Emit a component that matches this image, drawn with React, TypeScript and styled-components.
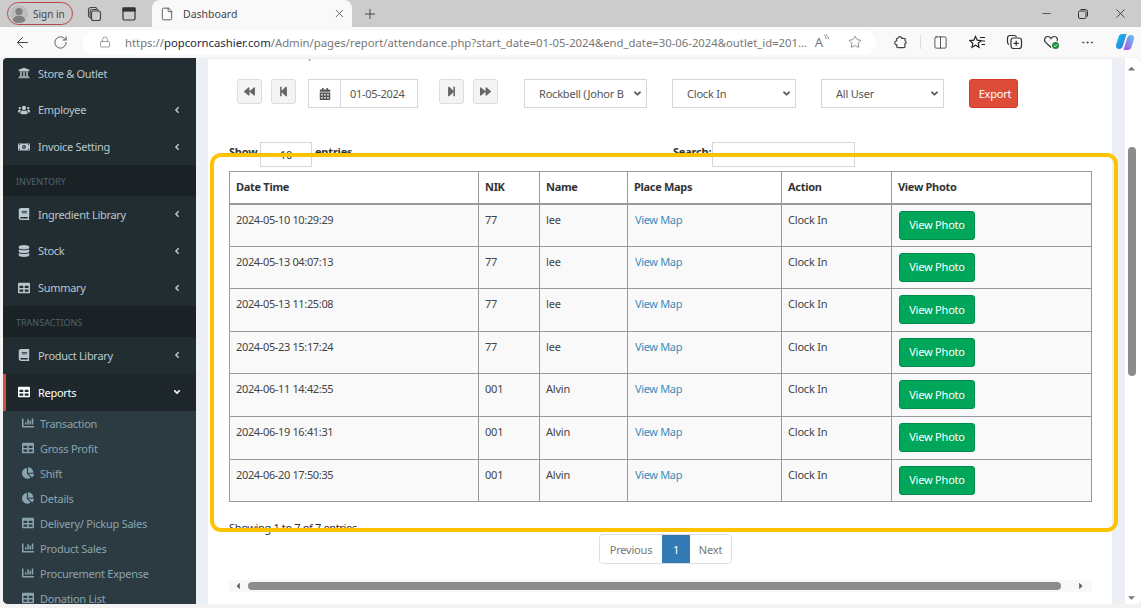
import React from "react";
import styled, { createGlobalStyle } from "styled-components";
import {
  FaUniversity, FaUsers, FaMoneyBillAlt, FaBook, FaDatabase, FaTable, FaChartBar, FaChartPie,
  FaBackward, FaForward, FaStepBackward, FaStepForward, FaCalendarAlt, FaAngleLeft, FaAngleDown, FaCaretUp, FaCaretDown, FaCaretLeft, FaCaretRight,
} from "react-icons/fa";
import { ArrowLeft, RotateCw, Lock, X, Plus, File, Star, Minus, Columns2, Ellipsis } from "lucide-react";

const BODY_FONT = `"Noto Sans", "Liberation Sans", sans-serif`;

const Global = createGlobalStyle`
  html, body { margin: 0; padding: 0; width: 1141px; height: 608px; overflow: hidden; background: #f3f3f3; }
  * { box-sizing: border-box; }
  body { font-family: ${BODY_FONT}; }
`;

const Frame = styled.div`
  position: relative;
  width: 1141px;
  height: 608px;
  display: flex;
  flex-direction: column;
  overflow: hidden;
`;

const TitleBar = styled.div`
  height: 27px;
  background: #cccccc;
  display: flex;
  align-items: flex-end;
  padding-left: 7px;
  color: #333;
`;

const SignIn = styled.div`
  width: 66px;
  height: 23px;
  margin-bottom: 2px;
  border: 1.5px solid #b5474a;
  border-radius: 12px;
  display: flex;
  align-items: center;
  gap: 5px;
  padding-left: 2px;
  font-size: 10px;
  color: #444;
`;

const Avatar = styled.svg`
  width: 18px;
  height: 18px;
  flex: none;
`;

const TitleIcon = styled.div<{ $ml: number }>`
  margin-left: ${(p) => p.$ml}px;
  height: 27px;
  display: flex;
  align-items: center;
  color: #444;
`;

const Tab = styled.div`
  width: 200px;
  height: 27px;
  margin-left: 16px;
  background: #f9f9f9;
  border-radius: 8px 8px 0 0;
  display: flex;
  align-items: center;
  padding: 0 6px 0 8px;
  font-size: 10.5px;
  color: #444;
`;

const TabLabel = styled.span`
  margin-left: 9px;
  flex: 1;
`;

const WindowControls = styled.div`
  margin-left: auto;
  height: 27px;
  display: flex;
  align-items: center;
  gap: 24px;
  padding-right: 13px;
  color: #333;
`;

const Toolbar = styled.div`
  height: 30px;
  background: #f9f9f9;
  display: flex;
  align-items: center;
  padding-left: 14px;
  color: #444;
`;

const AddressPill = styled.div`
  margin-left: 15px;
  width: 793px;
  height: 25px;
  background: #fff;
  border-radius: 13px;
  display: flex;
  align-items: center;
  padding: 0 14px 0 16px;
  font-size: 11.3px;
  white-space: nowrap;
  color: #777;
`;

const Url = styled.span`
  margin-left: 14px;
  flex: 1;
  overflow: hidden;
`;

const Host = styled.span`
  color: #1c2b3f;
`;

const ReadAloud = styled.span`
  display: flex;
  align-items: flex-start;
  font-size: 13px;
  line-height: 16px;
  color: #777;
  margin-right: 19px;
`;

const ToolIcons = styled.div`
  display: flex;
  align-items: center;
  margin-left: 17px;
  gap: 20px;
`;

const Divider = styled.div`
  width: 1px;
  height: 14px;
  background: #ddd;
  margin: 0 -8px;
`;

const FavIcon = styled.svg`
  margin-left: 1px;
`;

const Body = styled.div`
  flex: 1;
  display: flex;
  min-height: 0;
  padding: 1px 0 4px 3px;
  background: #f3f3f3;
`;

const Sidebar = styled.nav`
  width: 193px;
  flex: none;
  background: #222d32;
  border-radius: 4px 0 0 5px;
  overflow: hidden;
  font-size: 11px;
  letter-spacing: -0.3px;
`;

const MenuRow = styled.div<{ $active?: boolean; $h?: number }>`
  height: ${(p) => p.$h ?? 36.7}px;
  display: flex;
  align-items: center;
  padding-left: ${(p) => (p.$active ? 11 : 14)}px;
  padding-right: 14px;
  padding-bottom: ${(p) => (p.$h ? 4 : p.$active ? 0 : 1)}px;
  gap: 7px;
  color: ${(p) => (p.$active ? "#fff" : "#b8c7ce")};
  background: ${(p) => (p.$active ? "#1e282c" : "transparent")};
  border-left: ${(p) => (p.$active ? "3px solid #dd4b39" : "none")};
  svg { flex: none; }
`;

const MenuIcon = styled.span`
  width: 14px;
  display: flex;
  justify-content: center;
  font-size: 12px;
`;

const MenuLabel = styled.span`
  flex: 1;
`;

const SectionHead = styled.div`
  height: 31px;
  background: #1a2226;
  color: #4b646f;
  font-size: 9px;
  letter-spacing: 0;
  display: flex;
  align-items: center;
  padding: 1px 0 0 13px;
`;

const SubMenu = styled.div`
  background: #2c3b41;
`;

const SubRow = styled.div`
  height: 25px;
  display: flex;
  align-items: center;
  padding-left: 18px;
  gap: 5px;
  color: #8aa4af;
  font-size: 11px;
  letter-spacing: -0.25px;
`;

const SubIcon = styled.span`
  width: 14px;
  display: flex;
  justify-content: center;
  font-size: 12px;
`;

const Main = styled.main`
  flex: 1;
  min-width: 0;
  background: #ecf0f5;
  padding: 1px 13px 0 12px;
  display: flex;
`;

const Card = styled.div`
  flex: 1;
  min-width: 0;
  background: #fff;
  display: flex;
  flex-direction: column;
  color: #333;
  font-size: 11px;
  letter-spacing: -0.2px;
`;

const ClippedTitle = styled.div`
  height: 3px;
  overflow: hidden;
  padding-left: 20px;
  font-size: 11px;
  letter-spacing: 0.4px;
  line-height: 0;
  color: #777;
`;

const ClippedText = styled.span`
  display: block;
  transform: translateY(-5px);
`;

const Filters = styled.div`
  margin: 17px 0 0 29px;
  height: 29px;
  display: flex;
  align-items: flex-start;
`;

const StepButton = styled.div<{ $ml?: number }>`
  width: 25px;
  height: 25px;
  margin-left: ${(p) => p.$ml ?? 0}px;
  background: #f4f4f4;
  border: 1px solid #ddd;
  border-radius: 3px;
  display: flex;
  align-items: center;
  justify-content: center;
  color: #666;
  font-size: 11px;
`;

const DateGroup = styled.div`
  width: 110px;
  height: 29px;
  margin: 0 21px 0 12px;
  border: 1px solid #d2d6de;
  display: flex;
  align-items: center;
  color: #555;
`;

const DateAddon = styled.div`
  width: 32px;
  height: 100%;
  border-right: 1px solid #d2d6de;
  display: flex;
  align-items: center;
  justify-content: center;
  font-size: 12px;
`;

const DateValue = styled.span`
  margin-left: 9px;
  letter-spacing: -0.3px;
`;

const FilterSelect = styled.div<{ $w: number; $ml: number; $pl: number }>`
  width: ${(p) => p.$w}px;
  height: 29px;
  margin-left: ${(p) => p.$ml}px;
  padding: 0 3px 0 ${(p) => p.$pl}px;
  border: 1px solid #d2d6de;
  display: flex;
  align-items: center;
  justify-content: space-between;
  color: #555;
  white-space: nowrap;
  overflow: hidden;
`;

const SelectText = styled.span<{ $w?: number }>`
  ${(p) => (p.$w ? `width: ${p.$w}px;` : "")}
  overflow: hidden;
`;

const ExportButton = styled.div`
  width: 49px;
  height: 29px;
  margin-left: 25px;
  padding-left: 3px;
  background: #dd4b39;
  border: 1px solid #d73925;
  border-radius: 3px;
  color: #fff;
  display: flex;
  align-items: center;
  justify-content: center;
`;

const TableTools = styled.div`
  margin: 34px 0 0 21px;
  height: 25px;
  display: flex;
  align-items: flex-start;
  font-weight: 700;
`;

const ToolText = styled.span<{ $w?: number }>`
  margin-top: 2px;
  ${(p) => (p.$w ? `width: ${p.$w}px;` : "")}
`;

const LengthBox = styled.div`
  width: 52px;
  height: 25px;
  margin: 0 3px 0 0;
  border: 1px solid #d2d6de;
  display: flex;
  align-items: center;
  justify-content: center;
  font-weight: 400;
`;

const SearchBox = styled.div`
  width: 143px;
  height: 25px;
  margin-left: -1px;
  border: 1px solid #d2d6de;
`;

const Table = styled.table`
  margin: 4px 0 0 21px;
  width: 862px;
  border-collapse: collapse;
  table-layout: fixed;
`;

const Col = styled.col<{ $w: number }>`
  width: ${(p) => p.$w}px;
`;

const Th = styled.th`
  height: 32px;
  padding: 0 6px 2px;
  border: 1px solid #999;
  border-bottom-width: 2px;
  text-align: left;
  font-weight: 700;
  letter-spacing: -0.3px;
`;

const Td = styled.td`
  height: 42.6px;
  padding: 7px 6px 0;
  border: 1px solid #999;
  background: #f9f9f9;
  color: #444;
  vertical-align: top;
  line-height: 16px;
`;

const DateTd = styled(Td)`
  letter-spacing: -0.35px;
`;

const ButtonCell = styled(Td)`
  padding: 6px 7px 0;
`;

const MapLink = styled.span`
  color: #3c8dbc;
  letter-spacing: -0.35px;
  margin-left: 1px;
`;

const PhotoButton = styled.div`
  width: 76px;
  height: 29px;
  background: #00a65a;
  border: 1px solid #008d4c;
  border-radius: 3px;
  color: #fff;
  display: flex;
  align-items: center;
  justify-content: center;
`;

const InfoLine = styled.div`
  margin: 18px 0 0 21px;
  height: 14px;
  line-height: 16px;
  letter-spacing: -0.35px;
`;

const Pagination = styled.div`
  align-self: flex-start;
  margin: 0 0 0 391px;
  display: flex;
  height: 30px;
  border: 1px solid #ddd;
  border-radius: 4px;
  overflow: hidden;
  color: #777;
`;

const PageItem = styled.div<{ $w: number; $active?: boolean }>`
  width: ${(p) => p.$w}px;
  display: flex;
  align-items: center;
  justify-content: center;
  background: ${(p) => (p.$active ? "#337ab7" : "#fff")};
  color: ${(p) => (p.$active ? "#fff" : "#777")};
`;

const HScroll = styled.div`
  margin: 16px 0 0 21px;
  width: 863px;
  height: 12px;
  background: #f8f8f8;
  display: flex;
  align-items: center;
  padding: 0 6px 0 4px;
  color: #666;
  font-size: 10px;
`;

const HThumb = styled.div`
  width: 813px;
  height: 8px;
  margin: 0 auto 0 5px;
  background: #8c8c8c;
  border-radius: 4px;
`;

const VScroll = styled.div`
  width: 16px;
  flex: none;
  background: #fff;
  border-radius: 0 6px 6px 0;
  padding: 5px 3px 1px 0;
  display: flex;
  flex-direction: column;
  align-items: center;
  color: #777;
  font-size: 11px;
`;

const VThumb = styled.div`
  width: 8px;
  height: 229px;
  margin-top: 73px;
  margin-bottom: auto;
  background: #8c8c8c;
  border-radius: 4px;
`;

const Highlight = styled.div`
  position: absolute;
  left: 210px;
  top: 153px;
  width: 908px;
  height: 379px;
  border: 4px solid #fdc300;
  border-radius: 11px;
  pointer-events: none;
`;

const menuTop = [
  { icon: <FaUniversity />, label: "Store & Outlet", h: 34, arrow: false },
  { icon: <FaUsers />, label: "Employee", arrow: true },
  { icon: <FaMoneyBillAlt />, label: "Invoice Setting", arrow: true },
];
const menuInv = [
  { icon: <FaBook />, label: "Ingredient Library" },
  { icon: <FaDatabase />, label: "Stock" },
  { icon: <FaTable />, label: "Summary" },
];
const subs = [
  { icon: <FaChartBar />, label: "Transaction" },
  { icon: <FaTable />, label: "Gross Profit" },
  { icon: <FaChartPie />, label: "Shift" },
  { icon: <FaChartPie />, label: "Details" },
  { icon: <FaTable />, label: "Delivery/ Pickup Sales" },
  { icon: <FaChartBar />, label: "Product Sales" },
  { icon: <FaChartBar />, label: "Procurement Expense" },
  { icon: <FaTable />, label: "Donation List" },
];
const rows = [
  ["2024-05-10 10:29:29", "77", "lee"],
  ["2024-05-13 04:07:13", "77", "lee"],
  ["2024-05-13 11:25:08", "77", "lee"],
  ["2024-05-23 15:17:24", "77", "lee"],
  ["2024-06-11 14:42:55", "001", "Alvin"],
  ["2024-06-19 16:41:31", "001", "Alvin"],
  ["2024-06-20 17:50:35", "001", "Alvin"],
];

const Ic = { strokeWidth: 1.4 };

export default function App() {
  return (
    <Frame>
      <Global />
      <TitleBar>
        <SignIn>
          <Avatar viewBox="0 0 18 18">
            <circle cx="9" cy="9" r="9" fill="#bdbdbd" />
            <circle cx="9" cy="6.6" r="3.6" fill="#7f7f7f" />
            <path d="M2.6 15.4c.8-3.2 3.3-4.6 6.4-4.6s5.6 1.4 6.4 4.6A9 9 0 0 1 9 18a9 9 0 0 1-6.4-2.6z" fill="#7f7f7f" />
          </Avatar>
          Sign in
        </SignIn>
        <TitleIcon $ml={13}>
          <svg width="16" height="16" viewBox="0 0 16 16" fill="none" stroke="#444" strokeWidth="1.1">
            <rect x="5.5" y="5" width="9" height="9.5" rx="2" />
            <path d="M3.5 11.5A2 2 0 0 1 2.5 10V4a2.5 2.5 0 0 1 2.5-2.5h4.5A2 2 0 0 1 11 3" />
            <path d="M5 12.5A2 2 0 0 1 4.2 11V5.5A2 2 0 0 1 6.2 3.5h4.5A2 2 0 0 1 12.5 5" />
          </svg>
        </TitleIcon>
        <TitleIcon $ml={20}>
          <svg width="14" height="14" viewBox="0 0 14 14" fill="none" stroke="#333" strokeWidth="1.2">
            <rect x="1" y="1" width="12" height="12" rx="1.5" />
            <rect x="1" y="1" width="12" height="3" fill="#333" />
          </svg>
        </TitleIcon>
        <Tab>
          <File size={14} {...Ic} />
          <TabLabel>Dashboard</TabLabel>
          <X size={13} {...Ic} />
        </Tab>
        <TitleIcon $ml={10}>
          <Plus size={16} {...Ic} />
        </TitleIcon>
        <WindowControls>
          <Minus size={13} {...Ic} />
          <svg width="12" height="12" viewBox="0 0 12 12" fill="none" stroke="#333" strokeWidth="1">
            <rect x="1.5" y="3" width="7.5" height="7.5" rx="1.5" />
            <path d="M3.5 1.5h5a2 2 0 0 1 2 2v5" />
          </svg>
          <X size={15} {...Ic} />
        </WindowControls>
      </TitleBar>
      <Toolbar>
        <ArrowLeft size={17} {...Ic} />
        <TitleIcon $ml={22}>
          <RotateCw size={15} {...Ic} />
        </TitleIcon>
        <AddressPill>
          <Lock size={12} {...Ic} />
          <Url>
            https://<Host>popcorncashier.com</Host>/Admin/pages/report/attendance.php?start_date=01-05-2024&amp;end_date=30-06-2024&amp;outlet_id=201...
          </Url>
          <ReadAloud>
            A
            <svg width="6" height="8" viewBox="0 0 6 8" fill="none" stroke="#777" strokeWidth="0.9">
              <path d="M1 1c1.500 1 2 2 2 4M3 .5c1.500 1 2.300 2.500 2.300 4.500" />
            </svg>
          </ReadAloud>
          <Star size={14} {...Ic} />
        </AddressPill>
        <ToolIcons>
          <svg width="15" height="15" viewBox="0 0 15 15" fill="none" stroke="#444" strokeWidth="1.2">
            <path d="M5.500 2.300c.6-1 2-1 2.700 0l.5 1h2.400c.7 0 1.200.5 1.200 1.200l-.3 1.300c1.300.4 1.500 2.300.2 2.900l-.5.3.4 2.200c0 1-.7 1.400-1.400 1.400H5.200c-1.200 0-1.600-.7-1.600-1.400l.3-1.300c-2.300.2-3-3.200-.8-3.900l.6-.2-.3-1.300c0-.7.7-1.200 1.200-1.200z" />
          </svg>
          <Divider />
          <Columns2 size={15} {...Ic} />
          <FavIcon width="17" height="15" viewBox="0 0 17 15" fill="none" stroke="#222" strokeWidth="1.2">
            <path d="M6.500 1.500l1.700 3.700 3.900.4-2.900 2.700.8 3.900-3.500-2-3.500 2 .8-3.900L1 5.600l3.900-.4z" />
            <path d="M11 2.500h5M12.500 6h3.500M12.500 9.500h3.500" />
          </FavIcon>
          <svg width="17" height="16" viewBox="0 0 17 16" fill="none" stroke="#333" strokeWidth="1.2">
            <rect x="5" y="4" width="10.500" height="10.500" rx="2.500" />
            <path d="M10.200 6.800v5M7.700 9.300h5" />
            <path d="M3.200 10.500A2.500 2.500 0 0 1 1.500 8V4A2.500 2.500 0 0 1 4 1.500h4A2.500 2.500 0 0 1 10.500 3" />
          </svg>
          <svg width="17" height="16" viewBox="0 0 17 16" fill="none">
            <path d="M8 13.500L2.500 8.200C.5 6 1.800 2.500 4.700 2.500c1.400 0 2.600.8 3.300 2 .7-1.200 1.900-2 3.300-2 2.600 0 3.800 2.700 2.700 4.800" stroke="#333" strokeWidth="1.200" />
            <circle cx="12.500" cy="11.500" r="3.500" fill="#1e8e3e" />
            <path d="M10.800 11.500l1.200 1.200 2.100-2.200" stroke="#fff" strokeWidth="1" />
          </svg>
          <Ellipsis size={15} {...Ic} />
          <svg width="20" height="20" viewBox="0 0 20 20">
            <defs>
              <linearGradient id="cpA" x1="0" y1="0" x2="1" y2="1">
                <stop offset="0" stopColor="#19c3e6" />
                <stop offset="1" stopColor="#2f6fe0" />
              </linearGradient>
              <linearGradient id="cpB" x1="1" y1="0" x2="0" y2="1">
                <stop offset="0" stopColor="#5ad0f0" />
                <stop offset="1" stopColor="#b44be0" />
              </linearGradient>
            </defs>
            <path d="M7 2h4.500L8 13.500C7.300 16 6 17 4 17 1.500 17 .5 15 1 13l2.500-8C4 3 5.300 2 7 2z" fill="url(#cpA)" />
            <path d="M13 18H8.500L12 6.500C12.700 4 14 3 16 3c2.500 0 3.500 2 3 4l-2.500 8c-.5 2-1.800 3-3.500 3z" fill="url(#cpB)" />
          </svg>
        </ToolIcons>
      </Toolbar>
      <Body>
        <Sidebar>
          {menuTop.map((m) => (
            <MenuRow key={m.label} $h={m.h}>
              <MenuIcon>{m.icon}</MenuIcon>
              <MenuLabel>{m.label}</MenuLabel>
              {m.arrow && <FaAngleLeft size={10} />}
            </MenuRow>
          ))}
          <SectionHead>INVENTORY</SectionHead>
          {menuInv.map((m) => (
            <MenuRow key={m.label}>
              <MenuIcon>{m.icon}</MenuIcon>
              <MenuLabel>{m.label}</MenuLabel>
              <FaAngleLeft size={10} />
            </MenuRow>
          ))}
          <SectionHead>TRANSACTIONS</SectionHead>
          <MenuRow>
            <MenuIcon><FaBook /></MenuIcon>
            <MenuLabel>Product Library</MenuLabel>
            <FaAngleLeft size={10} />
          </MenuRow>
          <MenuRow $active>
            <MenuIcon><FaTable /></MenuIcon>
            <MenuLabel>Reports</MenuLabel>
            <FaAngleDown size={10} />
          </MenuRow>
          <SubMenu>
            {subs.map((s) => (
              <SubRow key={s.label}>
                <SubIcon>{s.icon}</SubIcon>
                {s.label}
              </SubRow>
            ))}
          </SubMenu>
        </Sidebar>
        <Main>
          <Card>
            <ClippedTitle><ClippedText>Attendance Report</ClippedText></ClippedTitle>
            <Filters>
              <StepButton><FaBackward /></StepButton>
              <StepButton $ml={9}><FaStepBackward /></StepButton>
              <DateGroup>
                <DateAddon><FaCalendarAlt /></DateAddon>
                <DateValue>01-05-2024</DateValue>
              </DateGroup>
              <StepButton><FaStepForward /></StepButton>
              <StepButton $ml={9}><FaForward /></StepButton>
              <FilterSelect $w={123} $ml={26} $pl={14}>
                <SelectText $w={85}>Rockbell (Johor Bahru)</SelectText>
                <FaAngleDown size={11} />
              </FilterSelect>
              <FilterSelect $w={124} $ml={25} $pl={14}>
                <SelectText>Clock In</SelectText>
                <FaAngleDown size={11} />
              </FilterSelect>
              <FilterSelect $w={123} $ml={25} $pl={14}>
                <SelectText>All User</SelectText>
                <FaAngleDown size={11} />
              </FilterSelect>
              <ExportButton>Export</ExportButton>
            </Filters>
            <TableTools>
              <ToolText $w={31}>Show</ToolText>
              <LengthBox>10</LengthBox>
              <ToolText $w={358}>entries</ToolText>
              <ToolText $w={40}>Search:</ToolText>
              <SearchBox />
            </TableTools>
            <Table>
              <colgroup>
                <Col $w={249} />
                <Col $w={61} />
                <Col $w={88} />
                <Col $w={154} />
                <Col $w={110} />
                <Col $w={200} />
              </colgroup>
              <thead>
                <tr>
                  <Th>Date Time</Th>
                  <Th>NIK</Th>
                  <Th>Name</Th>
                  <Th>Place Maps</Th>
                  <Th>Action</Th>
                  <Th>View Photo</Th>
                </tr>
              </thead>
              <tbody>
                {rows.map((r) => (
                  <tr key={r[0]}>
                    <DateTd>{r[0]}</DateTd>
                    <Td>{r[1]}</Td>
                    <Td>{r[2]}</Td>
                    <Td><MapLink>View Map</MapLink></Td>
                    <Td>Clock In</Td>
                    <ButtonCell><PhotoButton>View Photo</PhotoButton></ButtonCell>
                  </tr>
                ))}
              </tbody>
            </Table>
            <InfoLine>Showing 1 to 7 of 7 entries</InfoLine>
            <Pagination>
              <PageItem $w={62}>Previous</PageItem>
              <PageItem $w={28} $active>1</PageItem>
              <PageItem $w={41}>Next</PageItem>
            </Pagination>
            <HScroll>
              <FaCaretLeft />
              <HThumb />
              <FaCaretRight />
            </HScroll>
          </Card>
        </Main>
        <VScroll>
          <FaCaretUp />
          <VThumb />
          <FaCaretDown />
        </VScroll>
      </Body>
      <Highlight />
    </Frame>
  );
}
